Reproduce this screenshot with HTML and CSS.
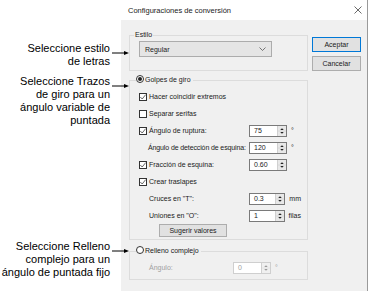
FILE: index.html
```html
<html lang="es">

<head>
    <meta charset="UTF-8">
    <meta name="viewport" content="width=device-width, initial-scale=1.0">
    <title>Configuraciones de conversión</title>
    <link rel="stylesheet" href="styles.css">
</head>

<body>
    <div class="page">
        <div class="notes">
            <div class="note note-style">
                <p>Seleccione estilo<br>de letras</p>
                <svg width="19" height="6" viewBox="0 0 19 6"><path d="M2 3H15" stroke="#000" stroke-width="1"/><path d="M14 1L19 3L14 5Z" fill="#000"/></svg>
            </div>
            <div class="note note-turn">
                <p>Seleccione Trazos<br>de giro para un<br>ángulo variable de<br>puntada</p>
                <svg width="19" height="6" viewBox="0 0 19 6"><path d="M2 3H15" stroke="#000" stroke-width="1"/><path d="M14 1L19 3L14 5Z" fill="#000"/></svg>
            </div>
            <div class="note note-fill">
                <p>Seleccione Relleno<br>complejo para un<br>ángulo de puntada fijo</p>
                <svg width="19" height="6" viewBox="0 0 19 6"><path d="M2 3H15" stroke="#000" stroke-width="1"/><path d="M14 1L19 3L14 5Z" fill="#000"/></svg>
            </div>
        </div>

        <div class="dialog">
            <div class="titlebar">
                <span>Configuraciones de conversión</span>
                <svg width="8" height="8" viewBox="0 0 8 8"><path d="M0.5 0.5L7.5 7.5M7.5 0.5L0.5 7.5" stroke="#444" stroke-width="0.8"/></svg>
            </div>

            <div class="dialog-body">
                <div class="main-col">
                    <fieldset class="group group-style">
                        <legend>Estilo</legend>
                        <div class="select">
                            <span>Regular</span>
                            <svg width="7" height="4" viewBox="0 0 7 4"><path d="M0.5 0.5L3.5 3.5L6.5 0.5" fill="none" stroke="#555" stroke-width="0.8"/></svg>
                        </div>
                    </fieldset>

                    <fieldset class="group group-turn">
                        <legend><span class="radio on"></span>Golpes de giro</legend>
                        <div class="row">
                            <div class="label"><span class="check on"><svg width="6" height="6" viewBox="0 0 6 6"><path d="M0.3 3L2.2 5L5.7 0.6" fill="none" stroke="#444" stroke-width="0.8"/></svg></span>Hacer coincidir extremos</div>
                        </div>
                        <div class="row">
                            <div class="label"><span class="check"></span>Separar serifas</div>
                        </div>
                        <div class="row">
                            <div class="label"><span class="check on"><svg width="6" height="6" viewBox="0 0 6 6"><path d="M0.3 3L2.2 5L5.7 0.6" fill="none" stroke="#444" stroke-width="0.8"/></svg></span>Ángulo de ruptura:</div>
                            <div class="spin"><span class="spin-field">75</span><span class="spin-arrows"><svg width="9" height="10" viewBox="0 0 9 10"><path d="M2.5 4L4.5 2L6.5 4Z M2.5 6L4.5 8L6.5 6Z" fill="#222"/><path d="M0 5H9" stroke="#c8c8c8" stroke-width="0.6"/></svg></span></div>
                            <span class="unit">°</span>
                        </div>
                        <div class="row">
                            <div class="label indent tight">Ángulo de detección de esquina:</div>
                            <div class="spin"><span class="spin-field">120</span><span class="spin-arrows"><svg width="9" height="10" viewBox="0 0 9 10"><path d="M2.5 4L4.5 2L6.5 4Z M2.5 6L4.5 8L6.5 6Z" fill="#222"/><path d="M0 5H9" stroke="#c8c8c8" stroke-width="0.6"/></svg></span></div>
                            <span class="unit">°</span>
                        </div>
                        <div class="row">
                            <div class="label"><span class="check on"><svg width="6" height="6" viewBox="0 0 6 6"><path d="M0.3 3L2.2 5L5.7 0.6" fill="none" stroke="#444" stroke-width="0.8"/></svg></span>Fracción de esquina:</div>
                            <div class="spin"><span class="spin-field">0.60</span><span class="spin-arrows"><svg width="9" height="10" viewBox="0 0 9 10"><path d="M2.5 4L4.5 2L6.5 4Z M2.5 6L4.5 8L6.5 6Z" fill="#222"/><path d="M0 5H9" stroke="#c8c8c8" stroke-width="0.6"/></svg></span></div>
                        </div>
                        <div class="row">
                            <div class="label"><span class="check on"><svg width="6" height="6" viewBox="0 0 6 6"><path d="M0.3 3L2.2 5L5.7 0.6" fill="none" stroke="#444" stroke-width="0.8"/></svg></span>Crear traslapes</div>
                        </div>
                        <div class="row">
                            <div class="label indent">Cruces en "T":</div>
                            <div class="spin"><span class="spin-field">0.3</span><span class="spin-arrows"><svg width="9" height="10" viewBox="0 0 9 10"><path d="M2.5 4L4.5 2L6.5 4Z M2.5 6L4.5 8L6.5 6Z" fill="#222"/><path d="M0 5H9" stroke="#c8c8c8" stroke-width="0.6"/></svg></span></div>
                            <span class="unit">mm</span>
                        </div>
                        <div class="row">
                            <div class="label indent">Uniones en "O":</div>
                            <div class="spin"><span class="spin-field">1</span><span class="spin-arrows"><svg width="9" height="10" viewBox="0 0 9 10"><path d="M2.5 4L4.5 2L6.5 4Z M2.5 6L4.5 8L6.5 6Z" fill="#222"/><path d="M0 5H9" stroke="#c8c8c8" stroke-width="0.6"/></svg></span></div>
                            <span class="unit">filas</span>
                        </div>
                        <button class="btn btn-suggest">Sugerir valores</button>
                    </fieldset>

                    <fieldset class="group group-fill">
                        <legend><span class="radio"></span>Relleno complejo</legend>
                        <div class="row disabled">
                            <div class="label label-short indent">Ángulo:</div>
                            <div class="spin"><span class="spin-field">0</span><span class="spin-arrows"><svg width="9" height="10" viewBox="0 0 9 10"><path d="M2.5 4L4.5 2L6.5 4Z M2.5 6L4.5 8L6.5 6Z" fill="#9a9a9a"/><path d="M0 5H9" stroke="#d8d8d8" stroke-width="0.6"/></svg></span></div>
                            <span class="unit">°</span>
                        </div>
                    </fieldset>
                </div>

                <div class="buttons">
                    <button class="btn btn-default">Aceptar</button>
                    <button class="btn">Cancelar</button>
                </div>
            </div>
        </div>
    </div>
</body>

</html>
```

FILE: styles.css
```css
* {
    box-sizing: border-box;
}

body {
    margin: 0;
    background-color: #fff;
    font-family: "Liberation Sans", Arial, sans-serif;
    color: #000;
}

.page {
    display: flex;
    height: 291px;
    overflow: hidden;
}

/* callouts on the left */
.notes {
    width: 121px;
    flex-shrink: 0;
    position: relative;
    z-index: 1;
    font-size: 11px;
    line-height: 13px;
}

.note {
    display: flex;
    width: 129px;
}

.note p {
    margin: 0;
    width: 110px;
    text-align: right;
}

.note svg {
    flex-shrink: 0;
    margin-top: 8px;
}

.note-style {
    margin-top: 42px;
}

.note-turn {
    margin-top: 7px;
}

.note-fill {
    margin-top: 113px;
}

/* dialog window */
.dialog {
    width: 247px;
    flex-shrink: 0;
    display: flex;
    flex-direction: column;
    border-right: 1px solid #9a9a9a;
    font-size: 7px;
    color: #1a1a1a;
}

.titlebar {
    height: 20px;
    display: flex;
    align-items: center;
    justify-content: space-between;
    padding: 0 5px 0 7px;
    background-color: #fff;
    font-size: 7.5px;
}

.dialog-body {
    flex: 1;
    display: flex;
    padding: 10px 0 0 8px;
    background-color: #f0f0f0;
}

.main-col {
    width: 179px;
}

.group {
    margin: 0;
    padding: 1px 6px 13px;
    border: 1px solid #dcdcdc;
    min-width: 0;
}

.group legend {
    padding: 0 2px 0 0;
    line-height: 10px;
}

.group-style legend {
    padding: 0 1px;
    margin-left: -2px;
}

.group-turn {
    margin-top: 4px;
    padding: 3px 6px 2px;
}

.group-fill {
    margin-top: 6px;
    padding: 3px 6px 3px;
}

.select {
    display: flex;
    align-items: center;
    justify-content: space-between;
    width: 133px;
    height: 16px;
    margin-left: 3px;
    padding: 0 5px 0 5px;
    background-color: #e5e5e5;
    border: 1px solid #acacac;
}

.radio {
    display: inline-block;
    width: 8px;
    height: 8px;
    margin-right: 1px;
    vertical-align: -1px;
    border: 1px solid #333;
    border-radius: 50%;
    background-color: #fff;
}

.radio.on::after {
    content: "";
    display: block;
    width: 4px;
    height: 4px;
    margin: 1px;
    border-radius: 50%;
    background-color: #222;
}

.row {
    display: flex;
    align-items: center;
    height: 17px;
    margin-left: 3px;
}

.label {
    display: flex;
    align-items: center;
    width: 110px;
    flex-shrink: 0;
    white-space: nowrap;
}

.label.indent {
    padding-left: 10px;
}

.label.tight {
    padding-left: 9px;
    letter-spacing: -0.12px;
}

.label-short {
    width: 94px;
}

.check {
    display: flex;
    align-items: center;
    justify-content: center;
    width: 8px;
    height: 8px;
    margin-right: 2px;
    flex-shrink: 0;
    border: 1px solid #333;
    background-color: #fff;
}

.spin {
    display: flex;
    width: 38px;
    height: 12px;
    border: 1px solid #7a7a7a;
    background-color: #fff;
}

.spin-field {
    flex: 1;
    padding-left: 4px;
    line-height: 10px;
}

.spin-arrows {
    display: flex;
    width: 9px;
    background-color: #e8e8e8;
    border-left: 1px solid #d0d0d0;
}

.unit {
    margin-left: 4px;
}

.disabled {
    color: #a0a0a0;
}

.disabled .spin {
    border-color: #cfcfcf;
}

.disabled .spin-arrows {
    background-color: #f0f0f0;
}

.btn {
    display: flex;
    align-items: center;
    justify-content: center;
    height: 15px;
    padding: 0;
    border: 1px solid #adadad;
    background-color: #e1e1e1;
    font-family: "Liberation Sans", Arial, sans-serif;
    font-size: 7px;
    color: #1a1a1a;
}

.btn-suggest {
    width: 68px;
    height: 13px;
    margin-left: 23px;
}

.buttons {
    display: flex;
    flex-direction: column;
    gap: 4px;
    width: 49px;
    margin-left: 4px;
    padding-top: 7px;
}

.btn-default {
    border-color: #0078d7;
}
```
